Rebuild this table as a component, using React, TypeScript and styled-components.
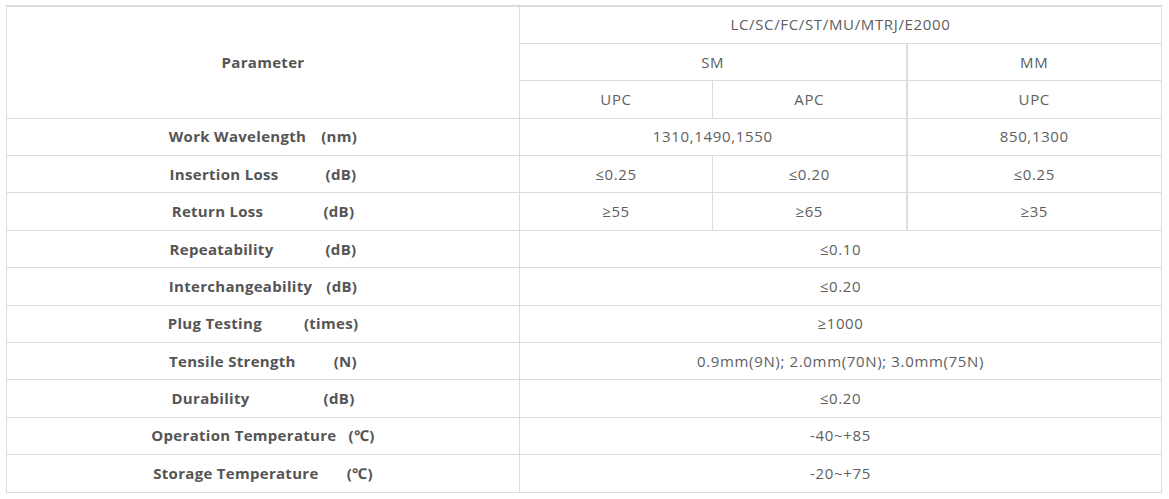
import React from "react";
import styled, { createGlobalStyle } from "styled-components";

const GlobalStyle = createGlobalStyle`
    html, body {
        margin: 0;
        padding: 0;
        background: #fff;
    }
    body {
        font-family: "Open Sans", "Noto Sans", "Liberation Sans", sans-serif;
    }
`;

const Page = styled.div`
    padding: 5px 8px 0 6px;
`;

const Table = styled.table`
    width: 1155px;
    border-collapse: collapse;
    table-layout: fixed;
    border-top: 2px solid #dcdcdc;
    font-size: 15px;
    letter-spacing: 0.65px;
    color: #606060;
`;

const Row = styled.tr`
    height: 37.4px;
`;

const Cell = styled.td<{ $thick?: boolean }>`
    border: 1px solid #dcdcdc;
    ${(p) => (p.$thick ? "border-left: 2px solid #dcdcdc;" : "")}
    text-align: center;
    vertical-align: middle;
    padding: 0 4px 1px;
    line-height: 20px;
`;

const HeadCell = styled(Cell)`
    font-weight: 700;
    letter-spacing: 0.3px;
    color: #555;
    white-space: nowrap;
`;

const Unit = styled.span<{ $gap: number }>`
    margin-left: ${(p) => p.$gap}px;
`;

type Spec = {
    name: string;
    unit: string;
    gap: number;
    values: string[];
};

const specs: Spec[] = [
    { name: "Work Wavelength", unit: "(nm)", gap: 15, values: ["1310,1490,1550", "850,1300"] },
    { name: "Insertion Loss", unit: "(dB)", gap: 47, values: ["≤0.25", "≤0.20", "≤0.25"] },
    { name: "Return Loss", unit: "(dB)", gap: 60, values: ["≥55", "≥65", "≥35"] },
    { name: "Repeatability", unit: "(dB)", gap: 52, values: ["≤0.10"] },
    { name: "Interchangeability", unit: "(dB)", gap: 14, values: ["≤0.20"] },
    { name: "Plug Testing", unit: "(times)", gap: 42, values: ["≥1000"] },
    { name: "Tensile Strength", unit: "(N)", gap: 38, values: ["0.9mm(9N); 2.0mm(70N); 3.0mm(75N)"] },
    { name: "Durability", unit: "(dB)", gap: 74, values: ["≤0.20"] },
    { name: "Operation Temperature", unit: "(℃)", gap: 12, values: ["-40~+85"] },
    { name: "Storage Temperature", unit: "(℃)", gap: 28, values: ["-20~+75"] },
];

const ValueCells = ({ values }: { values: string[] }) => {
    if (values.length === 1) {
        return <Cell colSpan={3}>{values[0]}</Cell>;
    }
    if (values.length === 2) {
        return (
            <>
                <Cell colSpan={2}>{values[0]}</Cell>
                <Cell $thick>{values[1]}</Cell>
            </>
        );
    }
    return (
        <>
            <Cell>{values[0]}</Cell>
            <Cell>{values[1]}</Cell>
            <Cell $thick>{values[2]}</Cell>
        </>
    );
};

const App = () => {
    return (
        <Page>
            <GlobalStyle />
            <Table>
                <colgroup>
                    <col style={{ width: 513 }} />
                    <col style={{ width: 193 }} />
                    <col style={{ width: 194 }} />
                    <col style={{ width: 255 }} />
                </colgroup>
                <tbody>
                    <Row>
                        <HeadCell rowSpan={3}>Parameter</HeadCell>
                        <Cell colSpan={3}>LC/SC/FC/ST/MU/MTRJ/E2000</Cell>
                    </Row>
                    <Row>
                        <Cell colSpan={2}>SM</Cell>
                        <Cell $thick>MM</Cell>
                    </Row>
                    <Row>
                        <Cell>UPC</Cell>
                        <Cell>APC</Cell>
                        <Cell $thick>UPC</Cell>
                    </Row>
                    {specs.map((s) => (
                        <Row key={s.name}>
                            <HeadCell>
                                {s.name}
                                <Unit $gap={s.gap}>{s.unit}</Unit>
                            </HeadCell>
                            <ValueCells values={s.values} />
                        </Row>
                    ))}
                </tbody>
            </Table>
        </Page>
    );
};

export default App;
